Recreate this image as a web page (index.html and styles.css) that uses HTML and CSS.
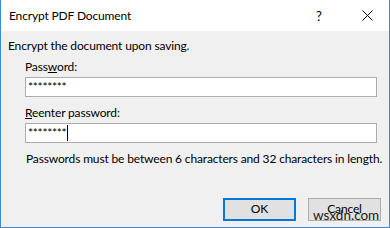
FILE: index.html
```html
<!DOCTYPE html>
<html>
<head>
<meta charset="utf-8">
<link rel="stylesheet" href="styles.css">
</head>
<body>
<div class="window">
  <div class="titlebar">
    <span class="title">Encrypt PDF Document</span>
    <span class="help">?</span>
    <svg class="close" width="11" height="11" viewBox="0 0 11 11"><path d="M0.5 0.5 L10.5 10.5 M10.5 0.5 L0.5 10.5" stroke="#000" stroke-width="1" fill="none"/></svg>
  </div>
  <div class="body">
    <div class="line">Encrypt the document upon saving.</div>
    <div class="section">
      <div class="line label">Pass<u>w</u>ord:</div>
      <div class="input">********</div>
      <div class="line label second"><u>R</u>eenter password:</div>
      <div class="input">********<span class="caret"></span></div>
      <div class="line note">Passwords must be between 6 characters and 32 characters in length.</div>
    </div>
    <div class="buttons">
      <div class="btn default">OK</div>
      <div class="btn">Cancel<span class="watermark">wsxdn.com</span></div>
    </div>
  </div>
</div>
</body>
</html>
```
FILE: styles.css
```css
html, body {
  margin: 0;
  padding: 0;
}
body {
  width: 390px;
  height: 228px;
  overflow: hidden;
  font-family: Lato, "Noto Sans", sans-serif;
  font-size: 12px;
  letter-spacing: -0.15px;
  color: #000;
}
.window {
  box-sizing: border-box;
  width: 390px;
  height: 228px;
  border: 1px solid #3b8ad6;
  border-top: none;
  display: flex;
  flex-direction: column;
  background: #f0f0f0;
}
.titlebar {
  height: 31px;
  background: #fff;
  display: flex;
  align-items: center;
  padding-left: 8px;
  line-height: 16px;
}
.title {
  flex: 1;
  padding-top: 1px;
  font-size: 12px;
}
.help {
  width: 10px;
  margin-right: 36px;
  font-size: 13px;
}
.close {
  margin-right: 16px;
}
.body {
  flex: 1;
  padding: 7px 7px 0 7px;
  display: flex;
  flex-direction: column;
}
.line {
  line-height: 16px;
  height: 16px;
  white-space: nowrap;
}
.section {
  padding-left: 17px;
  padding-right: 5px;
}
.label {
  margin-top: 5px;
  margin-bottom: 2px;
}
.label.second {
  margin-top: 8px;
}
.input {
  box-sizing: border-box;
  height: 20px;
  border: 1px solid #adadad;
  background: #fff;
  padding-left: 2px;
  line-height: 18px;
  font-size: 12px;
  display: flex;
  align-items: center;
  letter-spacing: -0.3px;
}
.caret {
  width: 1px;
  height: 16px;
  background: #000;
  margin-left: 1px;
}
.note {
  margin-top: 8px;
  padding-left: 1px;
}
.buttons {
  margin-top: 31px;
  display: flex;
  justify-content: flex-end;
  gap: 12px;
  padding-right: 1px;
}
.btn {
  position: relative;
  box-sizing: border-box;
  width: 73px;
  height: 23px;
  background: #e1e1e1;
  border: 1px solid #adadad;
  display: flex;
  align-items: flex-start;
  justify-content: center;
  padding-top: 2px;
  line-height: 16px;
}
.btn.default {
  border: 2px solid #0078d7;
  padding-top: 1px;
}
.watermark {
  position: absolute;
  left: 4px;
  top: 8px;
  font-size: 13.5px;
  line-height: 16px;
  letter-spacing: 0;
  color: #1a1a1a;
}
```
